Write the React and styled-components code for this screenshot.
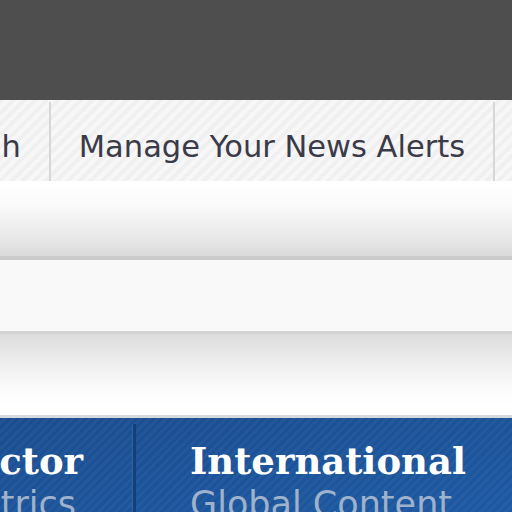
import React from "react";
import styled, { createGlobalStyle } from "styled-components";

const Global = createGlobalStyle`
  html, body { margin: 0; padding: 0; background: #ffffff; }
  body { width: 512px; height: 512px; overflow: hidden; }
`;

const Page = styled.div`
  width: 512px;
  height: 512px;
  overflow: hidden;
  display: flex;
  flex-direction: column;
`;

const TopBar = styled.div`
  height: 100px;
  flex: none;
  background: #4e4e4e;
`;

const Nav = styled.nav`
  height: 81px;
  flex: none;
  overflow: hidden;
  background-color: #f0f0f0;
  background-image: repeating-linear-gradient(
    -45deg,
    #f0f0f0 0px,
    #f0f0f0 4px,
    #f7f7f7 4px,
    #f7f7f7 8px
  );
`;

const NavList = styled.ul`
  list-style: none;
  margin: 0 0 0 -112px;
  padding: 0;
  height: 100%;
  display: flex;
  align-items: stretch;
`;

const NavItem = styled.li`
  display: flex;
  align-items: center;
  padding: 10px 28px 0 28px;
  margin-top: 2px;
  border-right: 2px solid #d7d7d7;
  font-family: "DejaVu Sans", Verdana, sans-serif;
  font-size: 30.5px;
  color: #3a3a48;
  white-space: nowrap;
  flex: none;
`;

const ShadowBand = styled.div`
  height: 79px;
  flex: none;
  background: linear-gradient(
    to bottom,
    #ffffff 0px,
    #fbfbfb 22px,
    #e6e6e6 60px,
    #d9d9d9 75px
  );
  border-bottom: 4px solid #cbcbcb;
  box-sizing: border-box;
`;

const MidBand = styled.div`
  height: 74px;
  flex: none;
  background: #f9f9f9;
  border-bottom: 3px solid #d3d3d3;
  box-sizing: border-box;
`;

const FadeBand = styled.div`
  height: 84px;
  flex: none;
  background: linear-gradient(
    to bottom,
    #dcdcdc 0px,
    #ececec 25px,
    #fbfbfb 55px,
    #ffffff 70px
  );
  border-bottom: 3px solid #d6dadf;
  box-sizing: border-box;
`;

const Categories = styled.div`
  flex: 1;
  overflow: hidden;
  background-color: #1b5096;
  background-image:
    repeating-linear-gradient(
      -45deg,
      rgba(255, 255, 255, 0) 0px,
      rgba(255, 255, 255, 0) 3px,
      rgba(255, 255, 255, 0.035) 3px,
      rgba(255, 255, 255, 0.035) 6px
    ),
    linear-gradient(to bottom right, #1a4d90, #1d59a2);
`;

const CatList = styled.div`
  display: flex;
  height: 100%;
  margin-left: -105px;
`;

const CatItem = styled.div`
  flex: none;
  display: flex;
  flex-direction: column;
  padding: 15px 50px 0 54px;
  margin-top: 6px;
  border-right: 3px solid #163f78;
  box-shadow: inset -1px 0 0 #2a63aa;
`;

const CatTitle = styled.div`
  font-family: "DejaVu Serif", Georgia, serif;
  font-weight: bold;
  font-size: 37px;
  line-height: 44px;
  color: #ffffff;
  white-space: nowrap;
`;

const CatSub = styled.div`
  font-family: "DejaVu Sans", Verdana, sans-serif;
  font-size: 35px;
  line-height: 42px;
  color: #9fb2cc;
  white-space: nowrap;
`;

export default function App() {
  return (
    <Page>
      <Global />
      <TopBar />
      <Nav>
        <NavList>
          <NavItem>Search</NavItem>
          <NavItem>Manage Your News Alerts</NavItem>
          <NavItem>Contact</NavItem>
        </NavList>
      </Nav>
      <ShadowBand />
      <MidBand />
      <FadeBand />
      <Categories>
        <CatList>
          <CatItem>
            <CatTitle>Sector</CatTitle>
            <CatSub>Metrics</CatSub>
          </CatItem>
          <CatItem>
            <CatTitle>International</CatTitle>
            <CatSub>Global Content</CatSub>
          </CatItem>
          <CatItem>
            <CatTitle>Local</CatTitle>
            <CatSub>Regional</CatSub>
          </CatItem>
        </CatList>
      </Categories>
    </Page>
  );
}
